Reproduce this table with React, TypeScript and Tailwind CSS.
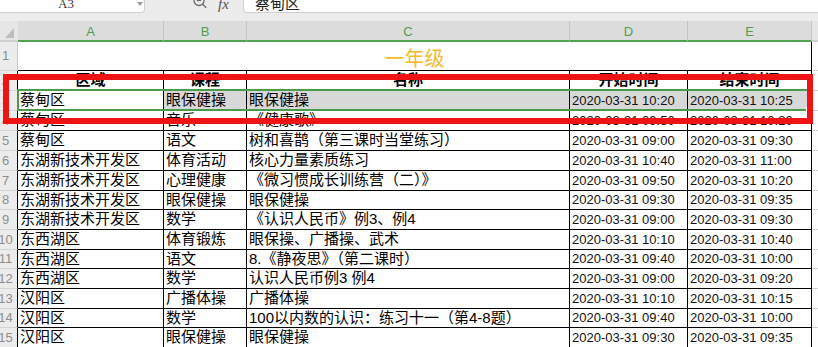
import React from "react";

type Row = { n: number; h: string; a: string; b: string; c: string; d: string; e: string };

const rows: Row[] = [
  { n: 3, h: "h-[20px]", a: "蔡甸区", b: "眼保健操", c: "眼保健操", d: "2020-03-31 10:20", e: "2020-03-31 10:25" },
  { n: 4, h: "h-[20px]", a: "蔡甸区", b: "音乐", c: "《健康歌》", d: "2020-03-31 09:50", e: "2020-03-31 10:20" },
  { n: 5, h: "h-[20px]", a: "蔡甸区", b: "语文", c: "树和喜鹊（第三课时当堂练习）", d: "2020-03-31 09:00", e: "2020-03-31 09:30" },
  { n: 6, h: "h-[20px]", a: "东湖新技术开发区", b: "体育活动", c: "核心力量素质练习", d: "2020-03-31 10:40", e: "2020-03-31 11:00" },
  { n: 7, h: "h-[20px]", a: "东湖新技术开发区", b: "心理健康", c: "《微习惯成长训练营（二）》", d: "2020-03-31 09:50", e: "2020-03-31 10:20" },
  { n: 8, h: "h-[19px]", a: "东湖新技术开发区", b: "眼保健操", c: "眼保健操", d: "2020-03-31 09:30", e: "2020-03-31 09:35" },
  { n: 9, h: "h-[20px]", a: "东湖新技术开发区", b: "数学", c: "《认识人民币》例3、例4", d: "2020-03-31 09:00", e: "2020-03-31 09:30" },
  { n: 10, h: "h-[20px]", a: "东西湖区", b: "体育锻炼", c: "眼保操、广播操、武术", d: "2020-03-31 10:10", e: "2020-03-31 10:40" },
  { n: 11, h: "h-[19px]", a: "东西湖区", b: "语文", c: "8.《静夜思》（第二课时）", d: "2020-03-31 09:40", e: "2020-03-31 10:00" },
  { n: 12, h: "h-[20px]", a: "东西湖区", b: "数学", c: "认识人民币例3 例4", d: "2020-03-31 09:00", e: "2020-03-31 09:20" },
  { n: 13, h: "h-[20px]", a: "汉阳区", b: "广播体操", c: "广播体操", d: "2020-03-31 10:10", e: "2020-03-31 10:15" },
  { n: 14, h: "h-[19px]", a: "汉阳区", b: "数学", c: "100以内数的认识：练习十一（第4-8题）", d: "2020-03-31 09:40", e: "2020-03-31 10:00" },
  { n: 15, h: "h-[20px]", a: "汉阳区", b: "眼保健操", c: "眼保健操", d: "2020-03-31 09:30", e: "2020-03-31 09:35" },
];

const cell = "shrink-0 border-r border-b border-black flex items-center overflow-hidden whitespace-nowrap";
const cjk = "text-[15px] text-black pl-[2px]";
const date = "text-[13px] text-[#111] pl-[2px]";

function RowNum({ n }: { n: number | string }) {
  return (
    <div className="w-[18px] shrink-0 bg-[#ececec] border-r border-black border-b border-b-[#d4d4d4] flex items-center justify-center pr-[6px] text-[13px] text-[#8c8c8c]">
      {n}
    </div>
  );
}

export default function App() {
  return (
    <div
      className="w-[818px] h-[347px] overflow-hidden bg-white relative"
      style={{ fontFamily: '"Liberation Sans", "Noto Sans CJK SC", sans-serif' }}
    >
      {/* formula bar */}
      <div className="h-[21px] bg-[#ececec] flex items-start">
        <div className="w-[145px] h-[13px] bg-white border-r border-b border-[#cfcfcf] rounded-br-[4px] flex items-start overflow-hidden relative">
          <span className="ml-[58px] mt-[-4px] text-[13px] leading-[16px] text-[#333]" style={{ fontFamily: '"Liberation Serif", serif' }}>A3</span>
          <svg className="absolute left-[137px] top-[2px]" width="6" height="4" viewBox="0 0 6 4">
            <path d="M0 0h6L3 4z" fill="#9a9a9a" />
          </svg>
        </div>
        <div className="w-[98px] h-[13px] flex items-start overflow-hidden">
          <svg className="ml-[47px] mt-[-6px] shrink-0" width="16" height="15" viewBox="0 0 16 15" fill="none" stroke="#6b6b6b" strokeWidth="1.3">
            <circle cx="7" cy="6.5" r="5" />
            <path d="M10.6 10.2l3.6 3.6" />
            <path d="M4.8 6.5h4.4" />
          </svg>
          <span className="ml-[10px] mt-[-4px] text-[15px] leading-[16px] italic text-[#555]" style={{ fontFamily: '"Liberation Serif", serif' }}>fx</span>
        </div>
        <div className="flex-1 h-[13px] bg-white border-l border-b border-[#cfcfcf] rounded-bl-[4px] overflow-hidden">
          <span className="block ml-[11px] mt-[-4px] text-[15px] leading-[16px] text-[#222]">蔡甸区</span>
        </div>
      </div>

      {/* column headers */}
      <div className="h-[21px] flex">
        <div className="w-[18px] shrink-0 bg-[#e6e6e6] border-b-2 border-b-[#d0d0d0] flex items-end pl-[5px] pb-[2px]">
          <svg width="9" height="10" viewBox="0 0 9 10">
            <path d="M9 0v10H0z" fill="#bdbdbd" />
          </svg>
        </div>
        {[
          ["A", "w-[146px]"],
          ["B", "w-[83px]"],
          ["C", "w-[323px]"],
          ["D", "w-[118px]"],
          ["E", "w-[124px]"],
        ].map(([l, w]) => (
          <div key={l} className={`${w} shrink-0 bg-[#dcdcdc] border-r border-r-[#c4c4c4] border-b-2 border-b-[#52a052] flex items-center justify-center pt-[2px] text-[13px] text-[#4f9e4f]`}>
            {l}
          </div>
        ))}
        <div className="flex-1 bg-[#e6e6e6] border-b-2 border-b-[#d0d0d0]" />
      </div>

      {/* row 1 title */}
      <div className="h-[29px] flex">
        <div className="w-[18px] shrink-0 bg-[#ececec] border-r border-r-[#c8c8c8] border-b border-b-[#d4d4d4] flex items-center justify-center pr-[6px] text-[13px] text-[#8c8c8c]">1</div>
        <div className="w-[794px] shrink-0 border-r border-b border-black flex items-end justify-center">
          <span className="text-[20px] leading-[21px] text-[#f4bb2a]">一年级</span>
        </div>
        <div className="flex-1 border-b border-dashed border-[#cfcfcf]" />
      </div>

      {/* row 2 headers */}
      <div className="h-[20px] flex font-bold text-[15px] text-black">
        <RowNum n={2} />
        <div className={`w-[146px] ${cell} justify-center`}>区域</div>
        <div className={`w-[83px] ${cell} justify-center`}>课程</div>
        <div className={`w-[323px] ${cell} justify-center`}>名称</div>
        <div className={`w-[118px] ${cell} justify-center`}>开始时间</div>
        <div className={`w-[124px] ${cell} justify-center`}>结束时间</div>
        <div className="flex-1 border-b border-dashed border-[#cfcfcf]" />
      </div>

      {rows.map((r) => {
        const sel = r.n === 3 ? "bg-[#d8d8d8]" : "";
        return (
          <div key={r.n} className={`${r.h} flex`}>
            <RowNum n={r.n} />
            <div className={`w-[146px] ${cell} ${cjk}`}>{r.a}</div>
            <div className={`w-[83px] ${cell} ${cjk} ${sel}`}>{r.b}</div>
            <div className={`w-[323px] ${cell} ${cjk} ${sel}`}>{r.c}</div>
            <div className={`w-[118px] ${cell} ${date} ${sel}`}>{r.d}</div>
            <div className={`w-[124px] ${cell} ${date} ${sel}`}>{r.e}</div>
            <div className="flex-1 border-b border-dashed border-[#cfcfcf]" />
          </div>
        );
      })}

      {/* selection */}
      <div className="absolute left-[17px] top-[89px] w-[793px] h-[22px] border-2 border-[#4a9a4a] pointer-events-none" />
      <div className="absolute left-[806px] top-[107px] w-[6px] h-[6px] bg-[#4a9a4a] border border-white" />

      {/* red annotation */}
      <div className="absolute left-[3px] top-[74px] w-[810px] h-[50px] border-[6px] border-[#ee1414] pointer-events-none" />
    </div>
  );
}
